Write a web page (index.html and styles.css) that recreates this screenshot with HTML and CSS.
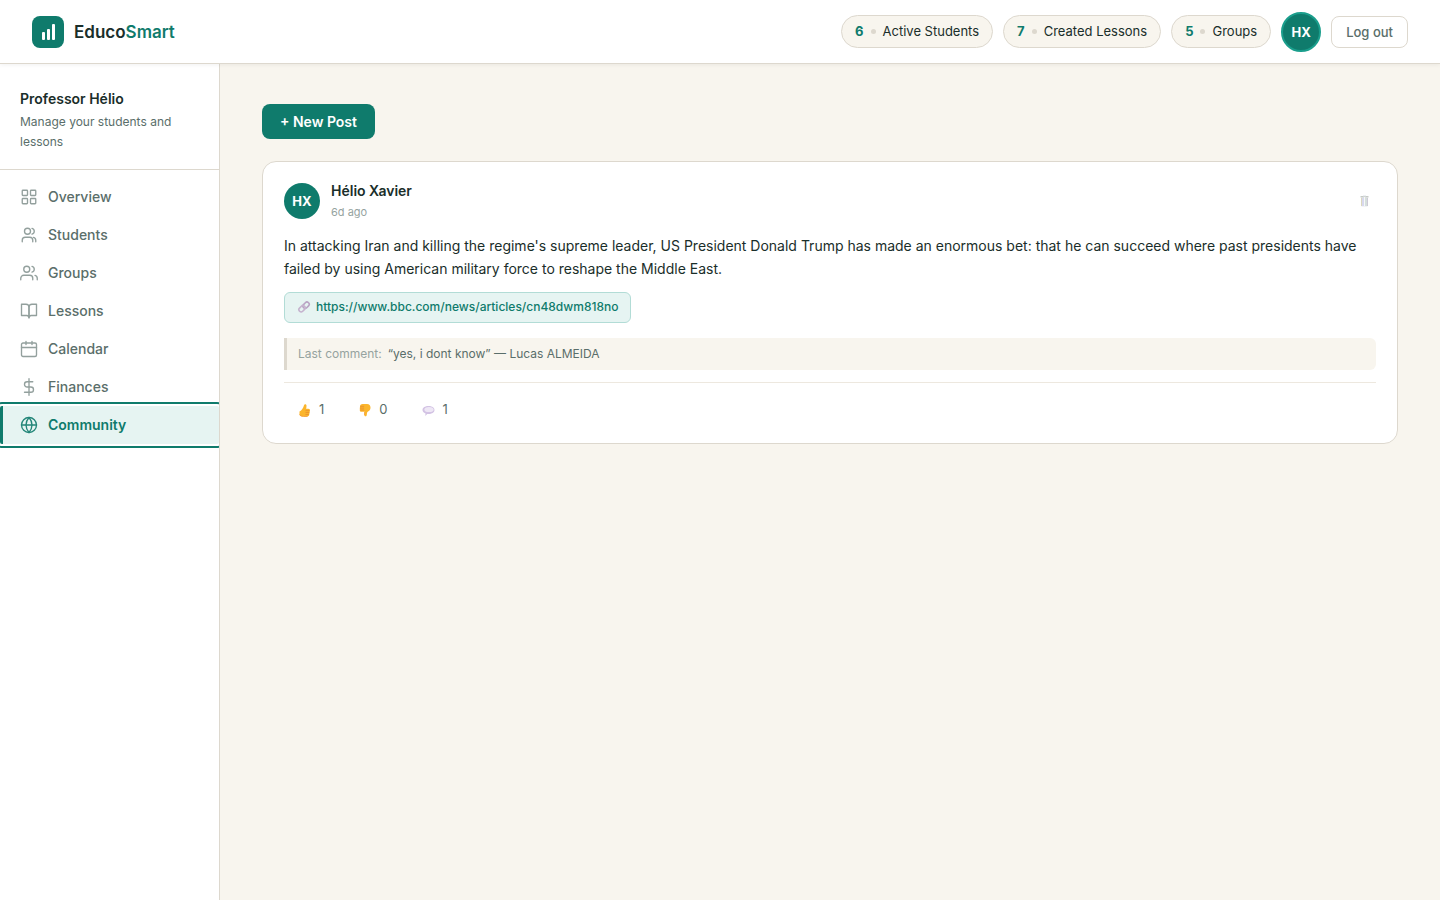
FILE: index.html
```html
<!DOCTYPE html>
<html lang="en">
<head>
    <meta charset="UTF-8">
    <meta name="viewport" content="width=device-width, initial-scale=1.0">
    <title>EducoSmart</title>
    <link rel="stylesheet" href="styles.css">
</head>
<body>
    <header class="topbar">
        <a class="brand" href="#">
            <svg class="brand-logo" viewBox="0 0 32 32">
                <rect width="32" height="32" rx="8" fill="#0f7b6c"/>
                <rect x="10" y="16" width="3" height="8" rx="1" fill="#fff"/>
                <rect x="15" y="13" width="3" height="11" rx="1" fill="#fff"/>
                <rect x="20" y="8" width="3" height="16" rx="1" fill="#fff"/>
            </svg>
            <span class="brand-name">Educo<span class="brand-accent">Smart</span></span>
        </a>
        <div class="topbar-right">
            <div class="stat"><strong>6</strong><span class="stat-dot"></span>Active Students</div>
            <div class="stat"><strong>7</strong><span class="stat-dot"></span>Created Lessons</div>
            <div class="stat"><strong>5</strong><span class="stat-dot"></span>Groups</div>
            <div class="avatar avatar-top">HX</div>
            <button class="logout" type="button">Log out</button>
        </div>
    </header>

    <div class="layout">
        <aside class="sidebar">
            <div class="profile">
                <div class="profile-name">Professor Hélio</div>
                <div class="profile-text">Manage your students and lessons</div>
            </div>
            <nav class="nav">
                <a class="nav-item" href="#">
                    <svg class="icon" viewBox="0 0 24 24"><rect x="3" y="3" width="7" height="7" rx="1"/><rect x="14" y="3" width="7" height="7" rx="1"/><rect x="3" y="14" width="7" height="7" rx="1"/><rect x="14" y="14" width="7" height="7" rx="1"/></svg>
                    Overview
                </a>
                <a class="nav-item" href="#">
                    <svg class="icon" viewBox="0 0 24 24"><circle cx="10" cy="7" r="4"/><path d="M3 21v-2a4 4 0 0 1 4-4h6a4 4 0 0 1 4 4v2"/><path d="M16 3.130a4 4 0 0 1 0 7.750"/><path d="M21 21v-2a4 4 0 0 0-3-3.850"/></svg>
                    Students
                </a>
                <a class="nav-item" href="#">
                    <svg class="icon" viewBox="0 0 24 24"><path d="M17 21v-2a4 4 0 0 0-4-4H5a4 4 0 0 0-4 4v2"/><circle cx="9" cy="7" r="4"/><path d="M23 21v-2a4 4 0 0 0-3-3.870"/><path d="M16 3.130a4 4 0 0 1 0 7.750"/></svg>
                    Groups
                </a>
                <a class="nav-item" href="#">
                    <svg class="icon" viewBox="0 0 24 24"><path d="M2 3h6a4 4 0 0 1 4 4v14a3 3 0 0 0-3-3H2z"/><path d="M22 3h-6a4 4 0 0 0-4 4v14a3 3 0 0 1 3-3h7z"/></svg>
                    Lessons
                </a>
                <a class="nav-item" href="#">
                    <svg class="icon" viewBox="0 0 24 24"><rect x="2" y="4" width="20" height="18" rx="2"/><path d="M8 2v4M16 2v4M2 10h20"/></svg>
                    Calendar
                </a>
                <a class="nav-item" href="#">
                    <svg class="icon" viewBox="0 0 24 24"><path d="M12 1v22"/><path d="M17 5H9.500a3.500 3.500 0 0 0 0 7h5a3.500 3.500 0 0 1 0 7H6"/></svg>
                    Finances
                </a>
                <a class="nav-item active" href="#">
                    <svg class="icon" viewBox="0 0 24 24"><circle cx="12" cy="12" r="10"/><path d="M2 12h20"/><path d="M12 2a15.300 15.300 0 0 1 4 10 15.300 15.300 0 0 1-4 10 15.300 15.300 0 0 1-4-10 15.300 15.300 0 0 1 4-10z"/></svg>
                    Community
                </a>
            </nav>
        </aside>

        <main class="content">
            <button class="new-post" type="button">+ New Post</button>

            <article class="post">
                <div class="post-head">
                    <div class="avatar">HX</div>
                    <div class="post-author">
                        <div class="post-name">Hélio Xavier</div>
                        <div class="post-time">6d ago</div>
                    </div>
                    <button class="delete" type="button" aria-label="Delete post">
                        <svg class="delete-icon" viewBox="0 0 12 14">
                            <path d="M3 3.500h7l-.5 9H3.500z" fill="#e6e8ef"/>
                            <path d="M2.500 2h8v1.500h-8z" fill="#c6cac6"/>
                            <path d="M5 1.500h3v1H5z" fill="#dde2e6"/>
                            <path d="M3.500 4v8" stroke="#dcd7bd"/>
                            <path d="M5 4v8" stroke="#c8c8ee"/>
                            <path d="M8 4v8" stroke="#c4d6c8"/>
                            <path d="M9.500 4v8" stroke="#cdc8d6"/>
                            <path d="M6.500 3v9" stroke="#f6f8f8"/>
                        </svg>
                    </button>
                </div>
                <p class="post-text">In attacking Iran and killing the regime's supreme leader, US President Donald Trump has made an enormous bet: that he can succeed where past presidents have failed by using American military force to reshape the Middle East.</p>
                <a class="post-link" href="#">
                    <svg class="link-icon" viewBox="0 0 14 14" fill="none" stroke-width="1.600">
                        <rect x="5.500" y="3" width="7" height="4.500" rx="2.200" transform="rotate(-45 9 5.200)" stroke="#b9a3c4"/>
                        <rect x="1.500" y="6.500" width="7" height="4.500" rx="2.200" transform="rotate(-45 5 8.700)" stroke="#c5b3ce"/>
                    </svg>
                    https://www.bbc.com/news/articles/cn48dwm818no
                </a>
                <div class="last-comment"><span class="comment-label">Last comment:</span>“yes, i dont know” — Lucas ALMEIDA</div>
                <div class="reactions">
                    <button class="reaction" type="button">
                        <svg class="emoji" viewBox="0 0 14 14">
                            <path d="M1.500 8.500c2.200-1 3.800-3.200 4.500-6.200.3-1.500 2.300-1.400 2.500.2.100 1.200-.1 2.200-.4 3.200h2.200c1.300 0 1.800.8 1.600 1.800l-.7 4.200c-.2 1.100-.9 1.700-1.900 1.700H4.500c-1.800 0-3-.8-3-2z" fill="#fbb52c"/>
                            <path d="M7.500 7.700h4M7.500 9.600h3.800M7.500 11.500h3.300" stroke="#e78b2d" stroke-width=".8"/>
                            <path d="M1.500 11.500c.8 1.200 2 1.900 4 2h4" fill="none" stroke="#f19a3b" stroke-width=".8"/>
                        </svg>
                        1
                    </button>
                    <button class="reaction" type="button">
                        <svg class="emoji" viewBox="0 0 14 14">
                            <path d="M2 3.300C2.200 1.700 3.200 1 4.600 1H9c2.300 0 3.500 1.500 3.500 3.800 0 2-1.200 3.100-2.800 3.900-.7.500-.8 1.900-.9 3.100-.2 2-2.400 2-2.500.1 0-1 .1-2.300.4-3.100H3.900c-1.500 0-2.200-.7-2.100-1.900z" fill="#fbb52c"/>
                            <path d="M2.200 3.300h3.900M1.900 5.100h4.200M2.400 7h3.700" stroke="#e78b2d" stroke-width=".8"/>
                            <path d="M6.500 9v3" stroke="#f19a3b" stroke-width=".7"/>
                        </svg>
                        0
                    </button>
                    <button class="reaction" type="button">
                        <svg class="emoji" viewBox="0 0 14 14">
                            <path d="M6.500 3c3.500 0 6 1.600 6 4s-2.500 4-6 4H5.200L3.300 13l.2-2.500C1.500 9.800.5 8.500.5 7c0-2.400 2.500-4 6-4z" fill="#d3c3e4"/>
                            <ellipse cx="7" cy="6.500" rx="4.600" ry="2.600" fill="#eee7f5"/>
                        </svg>
                        1
                    </button>
                </div>
            </article>
        </main>
    </div>
</body>
</html>
```

FILE: styles.css
```css
* {
    box-sizing: border-box;
}
body {
    margin: 0;
    min-height: 100vh;
    display: flex;
    flex-direction: column;
    font-family: Inter, sans-serif;
    font-size: 14px;
    line-height: 22px;
    color: #1a2e2a;
    background: #f8f5ee;
}
a {
    text-decoration: none;
}
button {
    font-family: inherit;
    cursor: pointer;
}

/* top bar */
.topbar {
    display: flex;
    align-items: center;
    justify-content: space-between;
    height: 64px;
    padding: 0 32px;
    background: #fff;
    border-bottom: 1px solid #ddd8ce;
    box-shadow: 0 1px 4px rgba(0, 0, 0, 0.06);
    z-index: 1;
}
.brand {
    display: flex;
    align-items: center;
    gap: 10px;
    color: #1a2e2a;
}
.brand-logo {
    width: 32px;
    height: 32px;
}
.brand-name {
    font-size: 17px;
    font-weight: 600;
}
.brand-accent {
    color: #0f7b6c;
}
.topbar-right {
    display: flex;
    align-items: center;
    gap: 10px;
}
.stat {
    display: flex;
    align-items: center;
    gap: 7px;
    padding: 6px 13px;
    font-size: 13px;
    line-height: 19px;
    background: #f8f5ee;
    border: 1px solid #ddd8ce;
    border-radius: 20px;
}
.stat strong {
    color: #0f7b6c;
    font-weight: 700;
}
.stat-dot {
    width: 5px;
    height: 5px;
    border-radius: 50%;
    background: #ddd8ce;
}
.avatar {
    display: flex;
    align-items: center;
    justify-content: center;
    width: 36px;
    height: 36px;
    border-radius: 50%;
    background: #0f7b6c;
    color: #fff;
    font-size: 13px;
    font-weight: 700;
}
.avatar-top {
    width: 40px;
    height: 40px;
    border: 2px solid #1a9e8c;
}
.logout {
    height: 32px;
    padding: 0 14px;
    font-size: 13px;
    font-weight: 500;
    color: #5a6e6a;
    background: #fff;
    border: 1px solid #ddd8ce;
    border-radius: 8px;
}

/* sidebar */
.layout {
    flex: 1;
    display: flex;
}
.sidebar {
    flex: none;
    width: 220px;
    background: #fff;
    border-right: 1px solid #ddd8ce;
    overflow: hidden;
}
.profile {
    padding: 24px 20px 17px;
    border-bottom: 1px solid #ddd8ce;
}
.profile-name {
    margin-bottom: 2px;
    font-size: 14px;
    font-weight: 600;
}
.profile-text {
    font-size: 12px;
    line-height: 20px;
    color: #5a6e6a;
}
.nav {
    padding: 8px 0;
}
.nav-item {
    display: flex;
    align-items: center;
    gap: 10px;
    height: 38px;
    padding: 0 20px 0 17px;
    border-left: 3px solid transparent;
    font-size: 14px;
    font-weight: 500;
    color: #5a6e6a;
}
.icon {
    width: 18px;
    height: 18px;
    fill: none;
    stroke: currentColor;
    stroke-width: 1.8;
    stroke-linecap: round;
    stroke-linejoin: round;
    opacity: 0.65;
}
.nav-item.active {
    color: #0f7b6c;
    font-weight: 600;
    background: #e6f4f2;
    border-left-color: #0f7b6c;
    border-radius: 2px;
    outline: 2px solid #0f7b6c;
    outline-offset: 2px;
}
.active .icon {
    opacity: 0.9;
}

/* community feed */
.content {
    flex: 1;
    min-width: 0;
    padding: 40px 42px;
}
.new-post {
    display: block;
    height: 35px;
    margin-bottom: 22px;
    padding: 0 18px;
    font-size: 14px;
    font-weight: 600;
    color: #fff;
    background: #0f7b6c;
    border: 0;
    border-radius: 8px;
}
.post {
    padding: 18px 21px;
    background: #fff;
    border: 1px solid #ddd8ce;
    border-radius: 14px;
}
.post-head {
    display: flex;
    align-items: center;
    gap: 11px;
    margin-bottom: 12px;
}
.post-author {
    flex: 1;
}
.post-name {
    font-size: 14px;
    font-weight: 600;
}
.post-time {
    font-size: 11px;
    line-height: 20px;
    color: #96a39f;
}
.delete {
    display: flex;
    padding: 4px 6px;
    background: none;
    border: 0;
}
.delete-icon {
    width: 12px;
    height: 14px;
}
.post-text {
    margin: 0 0 12px;
    font-size: 14px;
    line-height: 23px;
}
.post-link {
    display: inline-flex;
    align-items: center;
    gap: 5px;
    padding: 5px 12px 6px;
    font-size: 12px;
    font-weight: 500;
    line-height: 18px;
    color: #0f7b6c;
    background: #e6f4f2;
    border: 1px solid #b2dcd6;
    border-radius: 6px;
}
.link-icon {
    width: 14px;
    height: 14px;
}
.last-comment {
    margin-top: 15px;
    padding: 6px 11px;
    font-size: 12px;
    line-height: 20px;
    color: #5a6e6a;
    background: #f8f5ee;
    border-left: 3px solid #ddd8ce;
    border-radius: 0 6px 6px 0;
}
.comment-label {
    margin-right: 6px;
    color: #96a39f;
}
.reactions {
    display: flex;
    gap: 6px;
    margin-top: 12px;
    padding-top: 12px;
    border-top: 1px solid #ede8df;
}
.reaction {
    display: flex;
    align-items: center;
    gap: 7px;
    padding: 5px 14px 6px;
    font-size: 13px;
    line-height: 19px;
    color: #5a6e6a;
    background: none;
    border: 0;
}
.emoji {
    width: 14px;
    height: 14px;
}
```
